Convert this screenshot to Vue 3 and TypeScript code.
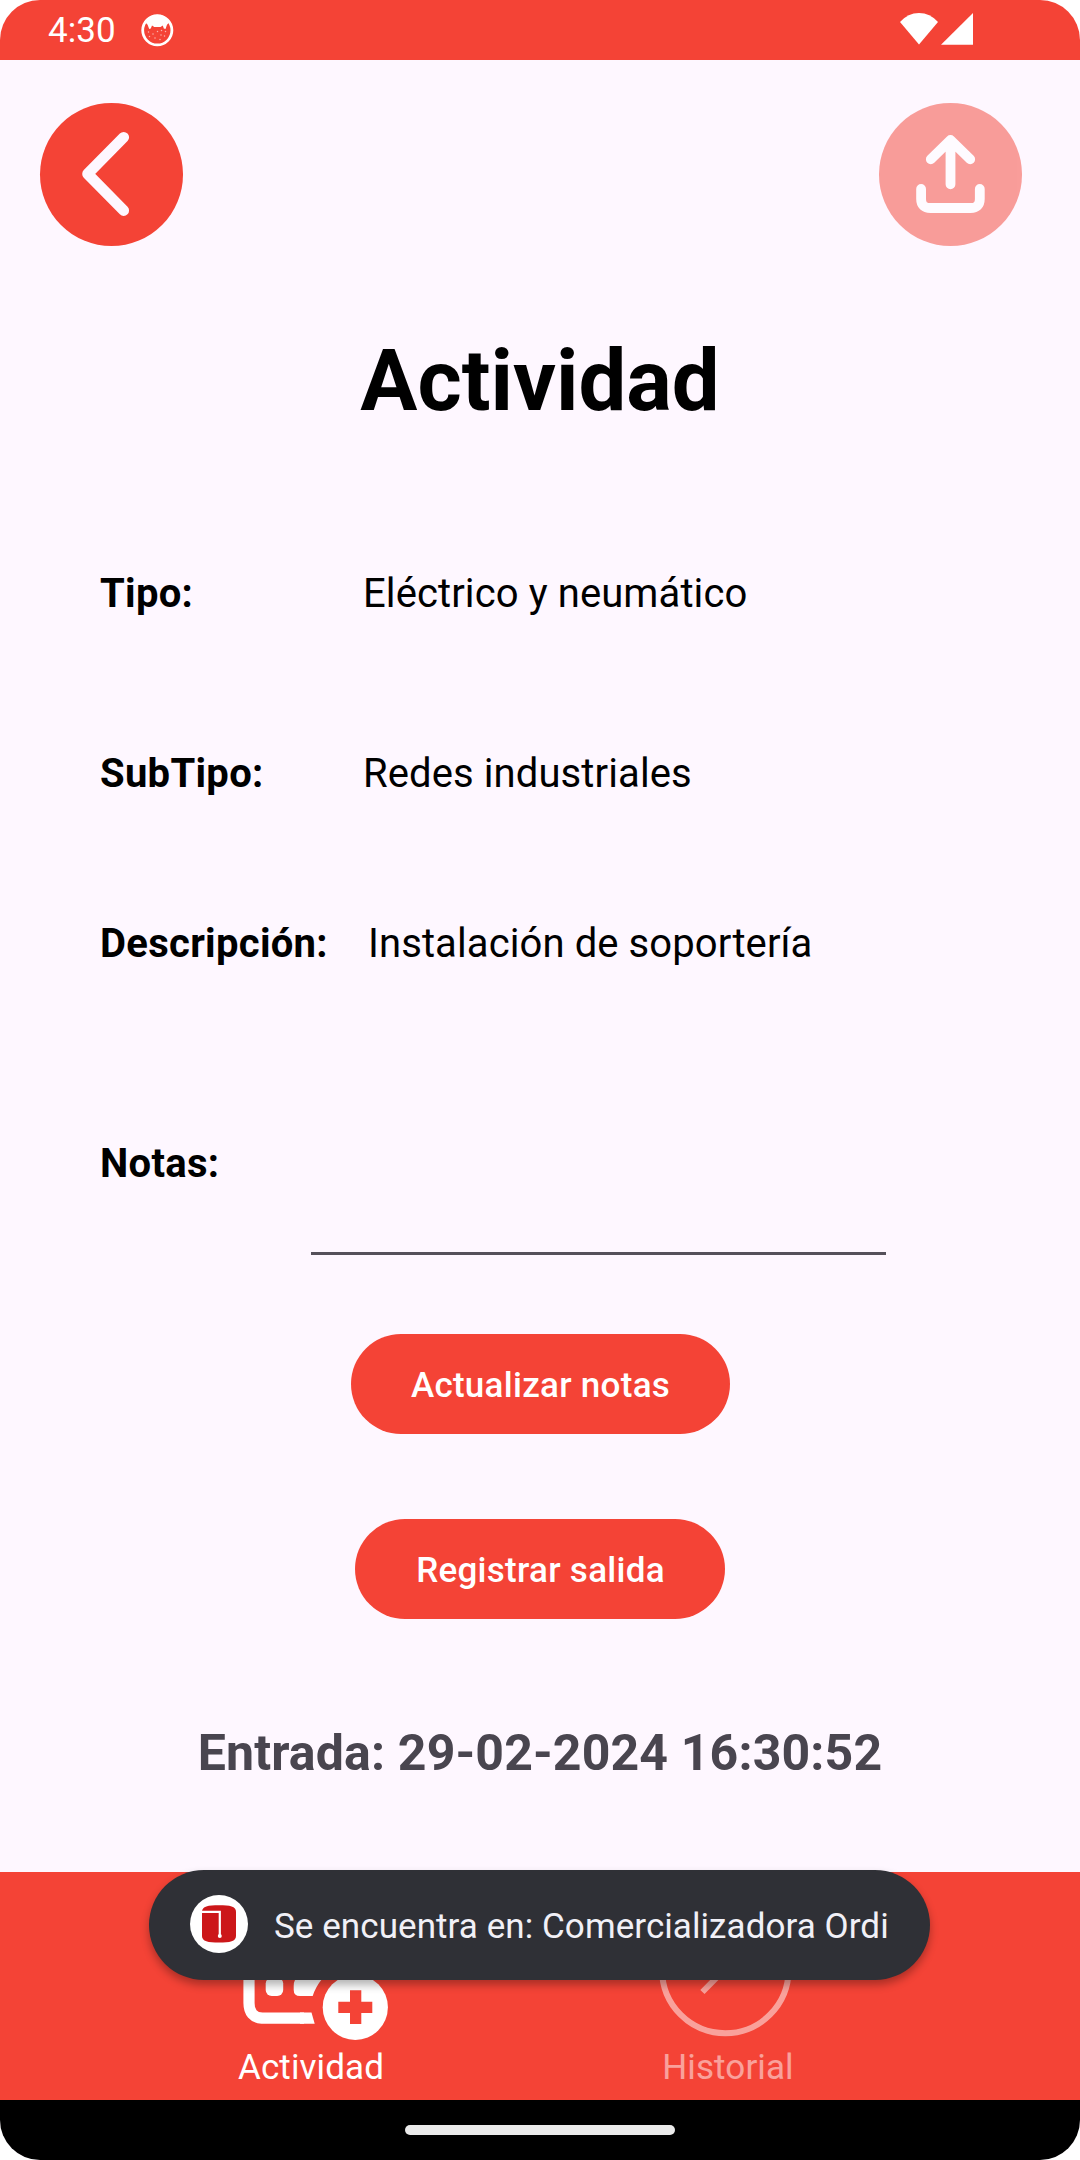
<script setup lang="ts">
interface Field {
  key: string
  label: string
  value: string
}

const fields: Field[] = [
  { key: 'tipo', label: 'Tipo:', value: 'Eléctrico y neumático' },
  { key: 'subtipo', label: 'SubTipo:', value: 'Redes industriales' },
  { key: 'descripcion', label: 'Descripción:', value: 'Instalación de soportería' },
]
const seeds: [number, number][] = [
  [8.5, 19], [13, 21], [17.5, 18.5], [21, 22], [25.5, 18.5], [9.5, 23.5], [15, 25], [20, 26.5], [24.5, 23], [21.5, 17.5],
]
</script>

<template>
  <div class="device">
    <header class="status">
      <span class="time">4:30</span>
      <svg class="cat" width="34" height="34" viewBox="0 0 34 34">
        <circle cx="17.3" cy="17.3" r="14.6" fill="none" stroke="#fff" stroke-width="2.8" />
        <path d="M5 9A14 14 0 0 1 29.6 9L27 11.8L25.5 16L23.8 15.6L22.8 12.6L20.5 14H14.3L12 12.6L10.8 15.6L9.2 16L7.6 11.8Z" fill="#fff" />
        <circle v-for="(s, i) in seeds" :key="i" :cx="s[0]" :cy="s[1]" r="0.75" fill="#fff" opacity=".6" />
      </svg>
      <svg class="signal" width="74" height="34" viewBox="0 0 74 34">
        <path d="M19 32.6L0 10Q8 1 19 1T38 10Z" fill="#fff" />
        <path d="M41 32.7L73 1V32.7Z" fill="#fff" />
      </svg>
    </header>

    <main class="content">
      <div class="toolbar">
        <button class="round">
          <svg width="143" height="143" viewBox="0 0 143 143">
            <path d="M83.7 34.3L47.6 70.9L83.7 107.5" fill="none" stroke="#fef7ff" stroke-width="10.8" stroke-linecap="round" stroke-linejoin="round" />
          </svg>
        </button>
        <button class="round faded">
          <svg width="143" height="143" viewBox="0 0 143 143" fill="none" stroke="#fff" stroke-width="9.8" stroke-linecap="round" stroke-linejoin="round">
            <path d="M71.5 37.3V81.3M51.8 56.3L71.5 36.9L91.2 56.3" />
            <path d="M42.1 86V96Q42.1 105 51.5 105H91.5Q100.8 105 100.8 96V86" />
          </svg>
        </button>
      </div>

      <h1 class="title">Actividad</h1>

      <div v-for="f in fields" :key="f.key" class="field" :class="f.key">
        <span class="label">{{ f.label }}</span>
        <span class="value">{{ f.value }}</span>
      </div>
      <div class="field notas">
        <span class="label">Notas:</span>
        <div class="input"></div>
      </div>

      <button class="pill update">Actualizar notas</button>
      <button class="pill exit">Registrar salida</button>
      <p class="entry">Entrada: 29-02-2024 16:30:52</p>
    </main>

    <nav class="tabs">
      <div class="tab active">
        <svg width="150" height="150" viewBox="0 0 150 150">
          <path d="M72 138.2H30Q17 137 17 123V34Q17 20 31 20H112Q126 20 126 34V62" fill="none" stroke="#fff" stroke-width="11.2" />
          <path d="M68 132.6H79.5L82.7 143.8H68Z" fill="#fff" />
          <rect x="33.7" y="97.5" width="17.5" height="18.5" rx="6" fill="#fff" />
          <path d="M90 97.5H66Q61.7 99 61.7 106V110Q61.7 116 68 116H80.7Q83.5 107 90 99Z" fill="#fff" />
          <circle cx="123.3" cy="127.3" r="32.6" fill="#fff" />
          <path d="M118 110.3h11.3v11.4h11v11.3h-11v11h-11.3v-11h-11.7v-11.3h11.7z" fill="#f44336" />
        </svg>
        <span>Actividad</span>
      </div>
      <div class="tab inactive">
        <svg width="150" height="150" viewBox="0 0 150 150">
          <circle cx="75.3" cy="90" r="63.2" fill="none" stroke="#fff" stroke-width="6" />
          <path d="M52.4 112L76 88V48" fill="none" stroke="#fff" stroke-width="6" />
        </svg>
        <span>Historial</span>
      </div>
    </nav>

    <div class="toast">
      <svg width="58" height="58" viewBox="0 0 58 58">
        <circle cx="29" cy="29" r="29" fill="#fff" />
        <path d="M12 17C12 11 18 10.2 29 10.2S46 11 46 17V41C46 46.5 40 47.6 29 47.6S12 46.5 12 41Z" fill="#cc1719" />
        <path d="M12 16.8H29.8V41" fill="none" stroke="#fff" stroke-width="2.2" />
        <circle cx="29.8" cy="41" r="2" fill="#fff" />
      </svg>
      <span>Se encuentra en: Comercializadora Ordi</span>
    </div>

    <footer class="gesture"><i></i></footer>
  </div>
</template>

<style>
body {
  margin: 0;
  background: #fff;
}
</style>

<style scoped>
.device {
  position: relative;
  width: 1080px;
  height: 2160px;
  display: flex;
  flex-direction: column;
  overflow: hidden;
  border-radius: 40px;
  background: #fef7ff;
  font-family: Roboto, "Liberation Sans", sans-serif;
  color: #000;
}
.status {
  height: 60px;
  flex: none;
  display: flex;
  background: #f44336;
  color: #fff;
}
.time {
  width: 92px;
  margin-left: 48px;
  font-size: 35px;
  line-height: 62px;
  letter-spacing: 0.1px;
}
.cat {
  margin-top: 13px;
}
.signal {
  margin: 12px 0 0 726px;
}
.content {
  height: 1812px;
  flex: none;
  display: flex;
  flex-direction: column;
}
.toolbar {
  display: flex;
  justify-content: space-between;
  padding: 43px 58px 0 40px;
}
.round {
  width: 143px;
  height: 143px;
  padding: 0;
  border: 0;
  border-radius: 50%;
  background: #f44336;
}
.round svg {
  display: block;
}
.faded {
  opacity: 0.5;
}
.title {
  margin: 85px 0 0;
  font-size: 85px;
  line-height: 100px;
  font-weight: 700;
  text-align: center;
}
.field {
  display: flex;
  height: 60px;
  padding-left: 100px;
  font-size: 40px;
  line-height: 60px;
  white-space: nowrap;
}
.label {
  width: 263px;
  font-weight: 700;
  letter-spacing: 0.29px;
}
.value {
  letter-spacing: 0.1px;
}
.tipo {
  margin-top: 133px;
}
.subtipo {
  margin-top: 120px;
}
.descripcion {
  margin-top: 110px;
}
.descripcion .label {
  width: 268px;
}
.notas {
  margin-top: 160px;
}
.notas .label {
  width: 211px;
}
.input {
  width: 575px;
  height: 118px;
  border-bottom: 3px solid #55505a;
}
.pill {
  height: 100px;
  padding: 1px 0 0 1px;
  border: 0;
  border-radius: 50px;
  align-self: center;
  background: #f44336;
  color: #fff;
  font: 500 35px/101px Roboto, sans-serif;
  letter-spacing: 0.28px;
  white-space: nowrap;
}
.update {
  width: 379px;
  margin-top: 140px;
}
.exit {
  width: 370px;
  margin-top: 85px;
}
.entry {
  margin: 104px 0 0;
  font-size: 50px;
  line-height: 60px;
  font-weight: 700;
  letter-spacing: 0.15px;
  color: #49454f;
  text-align: center;
}
.tabs {
  height: 228px;
  flex: none;
  display: flex;
  padding-left: 232px;
  background: #f44336;
  color: #fff;
}
.tab {
  width: 150px;
  display: flex;
  flex-direction: column;
  align-items: center;
  font-size: 35px;
  line-height: 44px;
  letter-spacing: 0.1px;
}
.tab svg {
  display: block;
  flex: none;
  margin-top: 8px;
  overflow: visible;
}
.tab span {
  margin-top: 16px;
  padding-left: 6px;
}
.active span {
  padding-left: 8px;
}
.inactive {
  margin-left: 268px;
  opacity: 0.5;
}
.toast {
  position: absolute;
  left: 149px;
  top: 1870px;
  width: 781px;
  height: 110px;
  box-sizing: border-box;
  padding-left: 41px;
  display: flex;
  align-items: center;
  border-radius: 55px;
  background: #2f3036;
  color: #f1f0f7;
  font-size: 35px;
  line-height: 60px;
  letter-spacing: 0.07px;
  white-space: nowrap;
  box-shadow: 0 5px 8px rgba(0, 0, 0, 0.3);
}
.toast svg {
  margin: 0 26px 2px 0;
}
.toast span {
  margin-top: 4px;
}
.gesture {
  height: 60px;
  flex: none;
  display: flex;
  justify-content: center;
  background: #000;
}
.gesture i {
  width: 270px;
  height: 10px;
  margin-top: 25px;
  border-radius: 5px;
  background: #ebebeb;
}
</style>
